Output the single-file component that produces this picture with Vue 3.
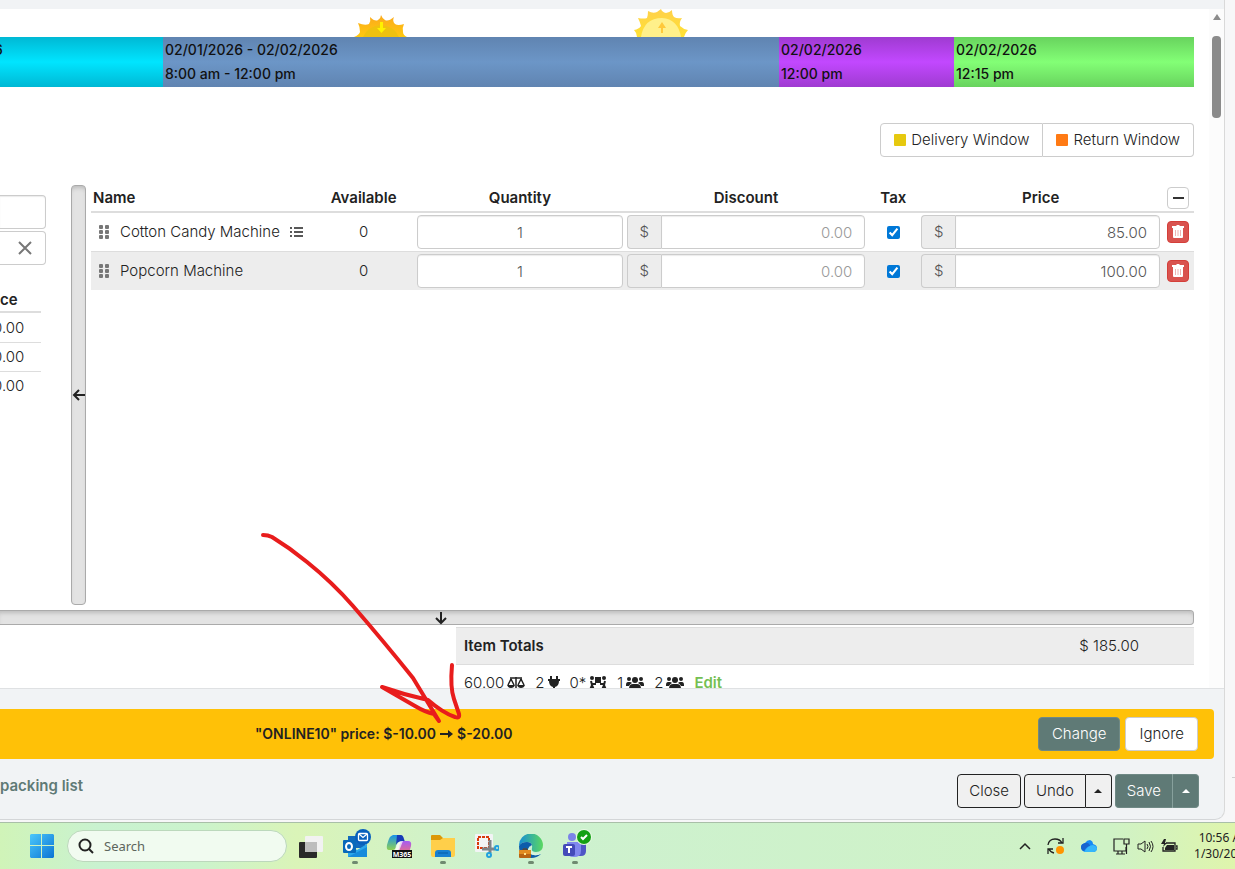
<template>
  <div class="screen">
    <div class="desk">
      <main class="dialog">
        <div class="dialog-top"></div>
        <div class="dialog-main">
          <div class="scroll-area">
            <div class="suns">
              <svg class="sun" viewBox="0 0 56 28" aria-hidden="true">
                <defs>
                  <linearGradient id="sunrise" x1="0" y1="0" x2="0" y2="1">
                    <stop offset="0" stop-color="#fba91d" />
                    <stop offset="1" stop-color="#ffc90e" />
                  </linearGradient>
                </defs>
                <path d="M1 28 Q6 26 7 23 Q7 18 5 14 Q12 17 16 15 Q18 12 17 8 Q22 13 25 11 Q28 9 28 6 Q29 9 32 11 Q35 13 41 8 Q39 12 42 15 Q45 17 51 15 Q49 19 50 23 Q50 26 54 28Z" fill="url(#sunrise)" />
                <path d="M10 28 Q15 17 28 16 Q41 17 46 28Z" fill="#efc10f" />
                <path d="M27 13h3v6h3l-4.500 5l-4.500-5h3z" fill="#fff200" />
              </svg>
              <svg class="sun" viewBox="0 0 56 28" aria-hidden="true">
                <defs>
                  <linearGradient id="sunset" x1="0" y1="0" x2="0" y2="1">
                    <stop offset="0" stop-color="#ffd04b" />
                    <stop offset="1" stop-color="#ffe234" />
                  </linearGradient>
                </defs>
                <path d="M4 28 Q4 24 1 21 Q6 20 8 17 Q7 13 5 9 Q11 10 14 9 Q15 6 15 2 Q20 5 24 3 L28 0 Q29 3 33 4 Q36 4 39 1 Q39 6 41 8 Q44 10 49 9 Q46 13 47 17 Q50 20 55 21 Q52 24 51 28Z" fill="url(#sunset)" />
                <path d="M8 28 Q11 9 29 9 Q45 10 48 28Z" fill="#fff08a" />
                <path d="M29 13l4 6h-3v5h-2v-5h-3z" fill="#ffc93a" />
              </svg>
            </div>

            <div class="timeline">
              <div class="slot cyan"><span class="cut">6</span></div>
              <div v-for="slot in slots" :key="slot.color" class="slot" :class="slot.color">
                <span>{{ slot.date }}</span>
                <span>{{ slot.time }}</span>
              </div>
            </div>

            <div class="windows">
              <button type="button" class="window-btn"><i class="swatch yellow"></i>Delivery Window</button>
              <button type="button" class="window-btn"><i class="swatch orange"></i>Return Window</button>
            </div>

            <div class="workspace">
              <aside class="side">
                <input class="field side-field" type="text" aria-label="Filter" />
                <div class="clear-row">
                  <button type="button" class="clear" aria-label="Clear">
                    <svg viewBox="0 0 14 14"><path d="M1 1L13 13M13 1L1 13" fill="none" stroke="#777" stroke-width="2" /></svg>
                  </button>
                </div>
                <table class="side-table">
                  <thead><tr><th>ce</th></tr></thead>
                  <tbody>
                    <tr v-for="n in 3" :key="n"><td>0.00</td></tr>
                  </tbody>
                </table>
              </aside>

              <div class="split-v">
                <svg viewBox="0 0 14 14" class="arrow"><path d="M13 7H2M7 2L2 7L7 12" fill="none" stroke="#222" stroke-width="2" /></svg>
              </div>

              <section class="items">
                <table class="item-table">
                  <colgroup>
                    <col />
                    <col class="c-avail" />
                    <col class="c-qty" />
                    <col class="c-money" />
                    <col class="c-tax" />
                    <col class="c-money" />
                    <col class="c-action" />
                  </colgroup>
                  <thead>
                    <tr>
                      <th class="name">Name</th>
                      <th>Available</th>
                      <th>Quantity</th>
                      <th>Discount</th>
                      <th>Tax</th>
                      <th>Price</th>
                      <th><button type="button" class="square" aria-label="Collapse"><i class="minus"></i></button></th>
                    </tr>
                  </thead>
                  <tbody>
                    <tr v-for="item in items" :key="item.name">
                      <td>
                        <div class="item-name">
                          <svg class="grip" viewBox="0 0 11 14" aria-hidden="true">
                            <g fill="#777">
                              <rect v-for="d in dots" :key="d.x + '-' + d.y" :x="d.x" :y="d.y" width="4" height="4" rx="1" />
                            </g>
                          </svg>
                          <span>{{ item.name }}</span>
                          <svg v-if="item.list" class="list" viewBox="0 0 13 10" aria-hidden="true">
                            <path d="M0 1h2M0 5h2M0 9h2M4 1h9M4 5h9M4 9h9" stroke="#222" stroke-width="1.500" />
                          </svg>
                        </div>
                      </td>
                      <td>0</td>
                      <td><input v-model="item.qty" class="field center" type="text" :aria-label="item.name + ' quantity'" /></td>
                      <td>
                        <label class="money"><span>$</span><input class="field" type="text" placeholder="0.00" /></label>
                      </td>
                      <td><input v-model="item.tax" class="check" type="checkbox" :aria-label="item.name + ' tax'" /></td>
                      <td>
                        <label class="money"><span>$</span><input v-model="item.price" class="field" type="text" /></label>
                      </td>
                      <td>
                        <button type="button" class="square delete" aria-label="Delete">
                          <svg viewBox="0 0 12 14">
                            <path d="M0 1h4l1-1h2l1 1h4v2H0zM1 3h10v9q0 1-1 1H2q-1 0-1-1z" fill="#fff" />
                            <path d="M3.500 5v6M6 5v6M8.500 5v6" stroke="#eeb5b3" />
                          </svg>
                        </button>
                      </td>
                    </tr>
                  </tbody>
                </table>
              </section>
            </div>

            <div class="split-h">
              <svg viewBox="0 0 14 14" class="arrow"><path d="M7 1V12M2 7L7 12L12 7" fill="none" stroke="#222" stroke-width="2" /></svg>
            </div>

            <section class="totals">
              <div class="total-row"><strong>Item Totals</strong><span>$ 185.00</span></div>
              <div class="stats">
                <span>60.00
                  <svg class="wide" viewBox="0 0 18 14">
                    <path d="M9 1V13M4 13H14M3 2H15M4 3L1 9M4 3L7 9M14 3L11 9M14 3L17 9" fill="none" stroke="#222" stroke-width="1.500" />
                    <path d="M0 9h8q-1 3-4 3t-4-3zM10 9h8q-1 3-4 3t-4-3z" fill="#222" />
                  </svg>
                </span>
                <span>2
                  <svg class="plug" viewBox="0 0 12 14"><path d="M2 0h2v3h4V0h2v3h2v2h-1q0 5-4 6v2H5v-2q-4-1-4-6H0V3h2z" fill="#222" /></svg>
                </span>
                <span>0*
                  <svg class="wide" viewBox="0 0 18 14">
                    <circle cx="3" cy="2" r="2" fill="#222" /><circle cx="15" cy="2" r="2" fill="#222" />
                    <rect x="6" y="1" width="6" height="6" fill="#222" />
                    <path d="M2 5L3 9L1 14M3 9L5 14M3 8H7M16 5L15 9L17 14M15 9L13 14M15 8H11" fill="none" stroke="#222" stroke-width="2" />
                  </svg>
                </span>
                <span v-for="n in 2" :key="n">{{ n }}
                  <svg class="wide" viewBox="0 0 18 14">
                    <g fill="#222">
                      <circle cx="9" cy="4" r="3" /><circle cx="3" cy="3" r="2" /><circle cx="15" cy="3" r="2" />
                      <path d="M3 13q0-5 4-5h4q4 0 4 5zM0 9q0-3 2-3h2q1 0 2 1q-2 1-3 3H0zM18 9q0-3-2-3h-2q-1 0-2 1q2 1 3 3h3z" />
                    </g>
                  </svg>
                </span>
                <a href="#" class="edit">Edit</a>
              </div>
            </section>
          </div>

          <div class="scrollbar">
            <svg viewBox="0 0 8 6"><path d="M4 0L8 6H0z" fill="#8b8b8b" /></svg>
            <div class="thumb"></div>
          </div>
        </div>

        <footer class="dialog-footer">
          <div class="notice">
            <strong class="notice-text">"ONLINE10" price: $-10.00
              <svg viewBox="0 0 13 8"><path d="M0 4H9" stroke="#222" stroke-width="2" /><path d="M8 0L13 4L8 8z" fill="#222" /></svg>
              $-20.00</strong>
            <button type="button" class="btn primary">Change</button>
            <button type="button" class="btn light">Ignore</button>
          </div>
          <div class="actions">
            <a href="#" class="packing">packing list</a>
            <button type="button" class="btn outline">Close</button>
            <div class="group">
              <button type="button" class="btn outline">Undo</button>
              <button type="button" class="btn outline caret" aria-label="More undo options"><i></i></button>
            </div>
            <div class="group">
              <button type="button" class="btn primary">Save</button>
              <button type="button" class="btn primary caret" aria-label="More save options"><i></i></button>
            </div>
          </div>
        </footer>
      </main>
      <div class="behind"></div>
    </div>

    <nav class="taskbar">
      <button type="button" class="app start" aria-label="Start">
        <svg viewBox="0 0 24 24">
          <defs>
            <linearGradient id="win" x1="0" y1="0" x2="1" y2="1">
              <stop offset="0" stop-color="#4cc8fb" />
              <stop offset="1" stop-color="#0a74d4" />
            </linearGradient>
          </defs>
          <path d="M1 0h10v11H0V1zM12 0h11l1 1v10H12zM0 12h11v12H1l-1-1zM12 12h12v11l-1 1H12z" fill="url(#win)" />
        </svg>
      </button>
      <label class="search">
        <svg viewBox="0 0 16 16"><circle cx="7" cy="7" r="5.500" fill="none" stroke="#222" stroke-width="2" /><path d="M11 11L15 15" stroke="#222" stroke-width="2" /></svg>
        <input type="text" placeholder="Search" aria-label="Search" />
      </label>
      <button type="button" class="app" aria-label="Task view">
        <svg viewBox="0 0 24 24">
          <rect x="0" y="8" width="18" height="16" rx="1" fill="#292929" />
          <rect x="6" y="2" width="18" height="16" rx="1" fill="#f2f2f2" />
          <rect x="6" y="8" width="12" height="10" fill="#bdbdbd" />
        </svg>
      </button>
      <button type="button" class="app running" aria-label="Outlook">
        <svg class="badged" viewBox="0 0 28 28">
          <rect x="7" y="6" width="17" height="12" fill="#1169bd" />
          <path d="M7 14L16 20L26 14V27H7z" fill="#2ba7ea" />
          <path d="M7 27L26 17V27z" fill="#168bdc" />
          <rect x="2" y="10" width="13" height="13" rx="1" fill="#0869ba" />
          <ellipse cx="8" cy="16.500" rx="3" ry="3.500" fill="none" stroke="#fff" stroke-width="2" />
          <circle cx="22" cy="7" r="8" fill="#075fbc" />
          <rect x="17.500" y="3.500" width="9" height="7" rx="1" fill="none" stroke="#fff" stroke-width="1.300" />
          <path d="M18 4L22 7.500L26 4" fill="none" stroke="#fff" stroke-width="1.300" />
        </svg>
      </button>
      <button type="button" class="app" aria-label="M365 Copilot">
        <svg class="badged" viewBox="0 0 28 28">
          <defs>
            <linearGradient id="cop-a" x1="0" y1="0" x2="0" y2="1">
              <stop offset="0" stop-color="#1692ec" /><stop offset="1" stop-color="#8fd151" />
            </linearGradient>
            <linearGradient id="cop-b" x1="0" y1="0" x2="0" y2="1">
              <stop offset="0" stop-color="#a55cf5" /><stop offset="1" stop-color="#fb7466" />
            </linearGradient>
          </defs>
          <path d="M8 5h8q-2 3-4 10q-1 5-5 5H4q-3 0-2-5q2-7 3-8t3-2z" fill="url(#cop-a)" />
          <path d="M12 5h4q2 0 3 4l1 3h-6q-2 0-3 3z" fill="#173cb8" />
          <path d="M17 11h6q4 0 3 5l-3 10h-9q-3 0-2-4l2-4q1-6 3-7z" fill="url(#cop-b)" />
          <path d="M11 15l4-4h3l-4 10h-4z" fill="#fff" opacity=".7" />
          <rect x="7" y="20" width="20" height="8" fill="#111" />
          <text x="17" y="27" text-anchor="middle" class="m365">M365</text>
        </svg>
      </button>
      <button type="button" class="app running" aria-label="File Explorer">
        <svg viewBox="0 0 24 24">
          <path d="M0 2q0-1 1-1h8l3 3h11q1 0 1 1v5H0z" fill="#dc9807" />
          <path d="M0 6h9l3-2h12v17q0 2-2 2H2q-2 0-2-2z" fill="#ffcf4a" />
          <path d="M4 23v-4q0-3 3-3h10q3 0 3 3v4z" fill="#1780d2" />
          <path d="M7 19h10" stroke="#075da7" />
        </svg>
      </button>
      <button type="button" class="app" aria-label="Snipping Tool">
        <svg viewBox="0 0 24 24">
          <rect width="18" height="18" rx="1" fill="#f2f4f5" />
          <rect x="3" y="3" width="11" height="11" fill="none" stroke="#d93a0c" stroke-width="2" stroke-dasharray="3 1" />
          <path d="M15 6V19M7 15H20" stroke="#7d8589" stroke-width="3" />
          <circle cx="14" cy="21" r="2" fill="none" stroke="#20a1de" stroke-width="2" />
          <circle cx="22" cy="14" r="2" fill="none" stroke="#20a1de" stroke-width="2" />
        </svg>
      </button>
      <button type="button" class="app running" aria-label="Edge">
        <svg viewBox="0 0 24 24">
          <defs>
            <linearGradient id="edge" x1="0" y1="0" x2="1" y2="0">
              <stop offset="0" stop-color="#168ed6" /><stop offset="1" stop-color="#5bd860" />
            </linearGradient>
          </defs>
          <path d="M0 12A12 12 0 0 1 24 11q0 7-7 7q-5 0-4-4q1-6-5-6q-6 0-8 4z" fill="url(#edge)" />
          <path d="M0 12q2-4 8-4q4 0 5 3q-5 3-2 8q3 4 11 1q-4 4-10 4Q0 23 0 12z" fill="#0d5cab" />
          <path d="M13 11q-4 3-1 6q4 4 10 2q-3 3-7 2q-7-1-6-6q1-3 4-4z" fill="#d7f5df" />
          <rect x="0" y="16" width="12" height="8" rx="1" fill="#b86412" />
          <path d="M0 17q0-1 1-1h10q1 0 1 1v3H0z" fill="#e28b20" />
          <path d="M4 16v-1h4v1" fill="none" stroke="#7a3d06" />
          <rect x="5" y="19" width="2" height="2" fill="#ffe08a" />
        </svg>
      </button>
      <button type="button" class="app running" aria-label="Teams">
        <svg class="badged" viewBox="0 0 28 28">
          <circle cx="11" cy="7" r="4" fill="#7b83e8" />
          <path d="M17 12h8v9q0 5-5 5h-4z" fill="#4f55c6" />
          <path d="M6 12h14v9q0 6-7 6t-7-6z" fill="#8087ee" />
          <rect x="2" y="14" width="12" height="12" rx="2" fill="#444bb9" />
          <path d="M5 17h6M8 17v6" stroke="#fff" stroke-width="2" />
          <circle cx="23" cy="7" r="8" fill="#e6f9e3" /><circle cx="23" cy="7" r="7" fill="#14a014" />
          <path d="M20 7L22 9L26 5" fill="none" stroke="#fff" stroke-width="2" />
        </svg>
      </button>

      <div class="tray">
        <svg class="chev" viewBox="0 0 12 8"><path d="M1 7L6 2L11 7" fill="none" stroke="#222" stroke-width="1.500" /></svg>
        <svg class="sync" viewBox="0 0 18 18">
          <path d="M1 8Q2 2 8 2Q13 2 15 6M16 1V6H11M7 16Q3 15 2 12M1 17V12H6" fill="none" stroke="#222" stroke-width="1.300" />
          <circle cx="13" cy="13" r="4" fill="#ff9500" />
        </svg>
        <svg class="cloud" viewBox="0 0 16 12">
          <path d="M4 12Q0 11 0 7Q0 4 4 3Q6 0 9 0Q12 1 12 4Q16 5 16 8Q16 12 12 12z" fill="#1689f5" />
          <path d="M3 12Q7 5 12 5Q16 6 16 9Q15 12 12 12z" fill="#35b6fb" />
          <path d="M0 7Q0 4 4 3Q8 2 9 6Q6 6 3 11Q0 10 0 7z" fill="#1763cf" />
        </svg>
        <div class="status">
          <svg viewBox="0 0 17 17"><path d="M10 1H1V13H13V9M5 13V16M9 13V16M3 16H12M11 1H16V6H11zM13.500 6V16" fill="none" stroke="#222" stroke-width="1.200" /></svg>
          <svg viewBox="0 0 17 17"><path d="M1 6H4L8 3V14L4 11H1zM10 6Q12 8.500 10 11M12 4Q15 8.500 12 13M14 3Q18 8.500 14 14" fill="none" stroke="#222" /></svg>
          <svg viewBox="0 0 17 17">
            <path d="M5 5H14V13H2V9M15 8H16V11H15" fill="none" stroke="#222" stroke-width="1.300" />
            <path d="M6 7H13V12H4V10zM3 1L0 6H3L2 9L6 5H4L5 1z" fill="#222" />
          </svg>
        </div>
        <div class="clock"><span>10:56 AM</span><span>1/30/2026</span></div>
      </div>
    </nav>

    <svg class="marker" viewBox="0 0 204 194" aria-hidden="true">
      <path d="M3 5Q8 5 12 7Q30 18 47 32Q72 52 93 76Q125 113 153 148L179 191L174 184Q165 182 155 176L122 157Q145 165 168 170Q183 183 195 187Q200 189 199 184L194 169Q190 158 192 135" />
    </svg>
  </div>
</template>

<script setup>
import { ref } from 'vue'

const slots = [
  { color: 'blue', date: '02/01/2026 - 02/02/2026', time: '8:00 am - 12:00 pm' },
  { color: 'purple', date: '02/02/2026', time: '12:00 pm' },
  { color: 'green', date: '02/02/2026', time: '12:15 pm' }
]

const items = ref([
  { name: 'Cotton Candy Machine', list: true, qty: '1', tax: true, price: '85.00' },
  { name: 'Popcorn Machine', list: false, qty: '1', tax: true, price: '100.00' }
])

const dots = [0, 5, 10].flatMap(y => [0, 6].map(x => ({ x, y })))
</script>

<style>
body {
  margin: 0;
}
</style>

<style scoped>
* {
  box-sizing: border-box;
}

.screen {
  position: relative;
  display: flex;
  flex-direction: column;
  height: 100vh;
  overflow: hidden;
  background: #f7f7f8;
  color: #222;
  font-family: Inter, "Open Sans", sans-serif;
  font-size: 15px;
  font-weight: 300;
  line-height: 24px;
}

button,
input {
  font: inherit;
  color: inherit;
}

button {
  padding: 0;
  cursor: pointer;
}

svg {
  display: block;
  flex: none;
}

strong,
th {
  font-weight: 600;
}

.desk {
  display: flex;
  flex: 1;
  min-height: 0;
  padding-bottom: 2px;
}

.dialog {
  display: flex;
  flex: 1;
  flex-direction: column;
  min-width: 0;
  overflow: hidden;
  background: #f1f3f5;
  border-right: 1px solid #d9d9d9;
  border-bottom: 1px solid #d4d6d8;
  border-bottom-right-radius: 10px;
}

.behind {
  display: flex;
  width: 10px;
}

.behind::after {
  content: "";
  width: 3px;
  height: 1px;
  margin: auto 0 42px auto;
  background: #d0d0d0;
}

.dialog-top {
  flex: none;
  height: 9px;
}

.dialog-main {
  display: flex;
  flex: 1;
  min-height: 0;
  background: #fff;
  border-bottom: 1px solid #dfe1e3;
}

.scroll-area {
  flex: 1;
  min-width: 0;
  padding-right: 15px;
  overflow: hidden;
}

.scrollbar {
  display: flex;
  flex-direction: column;
  align-items: center;
  gap: 16px;
  width: 15px;
  padding-top: 5px;
  background: #fcfcfc;
}

.scrollbar svg {
  width: 8px;
  height: 6px;
}

.thumb {
  width: 9px;
  height: 82px;
  border-radius: 4px;
  background: #8b8b8b;
}

.suns {
  display: flex;
  gap: 224px;
  height: 28px;
  padding-left: 353px;
}

.sun {
  width: 56px;
  height: 28px;
}

.timeline {
  display: grid;
  grid-template-columns: 163fr 616fr 175fr 240fr;
  height: 50px;
  font-size: 14px;
  font-weight: 500;
  color: #111;
}

.slot {
  display: flex;
  flex-direction: column;
  padding: 1px 2px;
  white-space: nowrap;
}

.cut {
  margin-left: -8px;
}

.cyan {
  background: linear-gradient(#00b8d4, #00e5ff 50%, #00b8d4);
}

.blue {
  background: linear-gradient(#6084b1, #6c96c7 50%, #6084b1);
}

.purple {
  background: linear-gradient(#9f3bd1, #c248ff 50%, #9f3bd1);
}

.green {
  background: linear-gradient(#68d35e, #83ff76 50%, #68d35e);
}

.windows {
  display: flex;
  justify-content: flex-end;
  padding: 36px 0 28px;
}

.window-btn {
  display: flex;
  align-items: center;
  gap: 5px;
  height: 34px;
  padding: 0 13px;
  background: #fff;
  border: 1px solid #ccc;
}

.window-btn:first-child {
  border-radius: 4px 0 0 4px;
}

.window-btn:last-child {
  border-left: 0;
  border-radius: 0 4px 4px 0;
}

.swatch {
  width: 12px;
  height: 12px;
  border-radius: 1px;
}

.yellow {
  background: #e6c90f;
}

.orange {
  background: #ff7a14;
}

.workspace {
  display: flex;
  height: 420px;
}

.side {
  flex: none;
  width: 46px;
  margin-right: 25px;
  padding-top: 10px;
}

.field {
  display: block;
  width: 100%;
  min-width: 0;
  height: 34px;
  padding: 0 12px;
  text-align: right;
  color: #555;
  background: #fff;
  border: 1px solid #ccc;
  border-radius: 4px;
  box-shadow: inset 0 1px 1px rgba(0, 0, 0, 0.08);
}

.field::placeholder {
  color: #999;
  opacity: 1;
}

.center {
  text-align: center;
}

.side-field,
.clear-row {
  height: 34px;
  border: 1px solid #ccc;
  border-left: 0;
  border-radius: 0 4px 4px 0;
}

.clear-row {
  display: flex;
  justify-content: flex-end;
  align-items: center;
  margin-top: 2px;
  padding-right: 13px;
}

.clear {
  background: none;
  border: 0;
}

.clear svg,
.arrow {
  width: 14px;
  height: 14px;
}

.side-table {
  width: 41px;
  margin-top: 24px;
  border-spacing: 0;
}

.side-table td {
  height: 29px;
  padding: 0;
  text-indent: -7px;
}

.side-table th {
  padding: 0;
  line-height: 22px;
  text-align: left;
  border-bottom: 2px solid #ddd;
}

.side-table tr + tr td {
  border-top: 1px solid #ddd;
}

.split-v,
.split-h {
  display: flex;
  flex: none;
  align-items: center;
  background: #e3e3e3;
  border: 1px solid #aaa;
  border-radius: 4px;
  box-shadow: inset 0 4px 4px -2px #bbb;
}

.split-v {
  width: 15px;
  margin-right: 5px;
}

.split-h {
  height: 15px;
  margin-top: 5px;
  padding-left: 434px;
  border-left: 0;
  border-radius: 0 4px 4px 0;
}

.items {
  flex: 1;
  min-width: 0;
}

.item-table {
  width: 100%;
  table-layout: fixed;
  border-spacing: 0;
}

.c-avail {
  width: 103px;
}

.c-qty {
  width: 19%;
}

.c-money {
  width: 22%;
}

.c-tax {
  width: 52px;
}

.c-action {
  width: 32px;
}

.item-table th {
  height: 28px;
  padding: 0;
  border-bottom: 2px solid #ddd;
}

.item-table .name {
  padding-left: 2px;
  text-align: left;
}

.item-table td {
  padding: 2px;
  text-align: center;
}

.item-table tbody tr:nth-child(even) td {
  background: #ededed;
  border-top: 1px solid #ddd;
}

.item-name {
  display: flex;
  align-items: center;
  gap: 10px;
  padding-left: 6px;
}

.grip {
  width: 11px;
  height: 14px;
}

.list {
  width: 13px;
  height: 10px;
}

.money {
  display: flex;
}

.money span {
  flex: none;
  width: 34px;
  line-height: 32px;
  color: #555;
  background: #ededed;
  border: 1px solid #ccc;
  border-right: 0;
  border-radius: 4px 0 0 4px;
}

.money .field {
  border-radius: 0 4px 4px 0;
}

.check {
  display: block;
  width: 13px;
  height: 13px;
  margin: 0 auto;
  accent-color: #0078d7;
}

.square {
  display: flex;
  align-items: center;
  justify-content: center;
  width: 22px;
  height: 22px;
  margin: 0 auto;
  background: #fff;
  border: 1px solid #ccc;
  border-radius: 4px;
}

.delete {
  background: #d9534f;
  border-color: #d43f3a;
}

.delete svg {
  width: 12px;
  height: 14px;
}

.minus {
  width: 11px;
  height: 2px;
  background: #333;
}

.totals {
  margin: 2px 0 0 456px;
}

.total-row {
  display: flex;
  align-items: center;
  justify-content: space-between;
  height: 38px;
  padding: 0 55px 0 8px;
  background: #ededed;
  border-top: 1px solid #ddd;
  border-bottom: 1px solid #ddd;
}

.stats {
  display: flex;
  gap: 10px;
  padding: 6px 8px;
}

.stats span {
  display: flex;
  align-items: center;
  gap: 3px;
}

.wide {
  width: 18px;
  height: 14px;
}

.plug {
  width: 12px;
  height: 14px;
}

.edit {
  color: #74bf52;
  font-weight: 600;
  text-decoration: none;
}

.dialog-footer {
  flex: none;
  padding: 20px 10px 11px 0;
}

.notice {
  display: flex;
  align-items: center;
  gap: 5px;
  height: 50px;
  padding: 0 16px 0 255px;
  background: #ffc107;
  border-radius: 0 4px 4px 0;
}

.notice-text {
  display: flex;
  flex: 1;
  align-items: center;
  gap: 4px;
  font-size: 14px;
}

.notice-text svg {
  width: 13px;
  height: 8px;
}

.btn {
  height: 34px;
  padding: 0 11px;
  border: 1px solid #ccc;
  border-radius: 4px;
}

.notice .btn {
  padding: 0 13px;
}

.primary {
  color: #fff;
  background: #5f7a76;
  border-color: #6f8985;
}

.light {
  background: #fff;
}

.outline {
  background: #f0f0f0;
  border-color: #222;
}

.actions {
  display: flex;
  align-items: center;
  gap: 3px;
  padding: 15px 15px 0 0;
}

.packing {
  flex: 1;
  padding-bottom: 10px;
  color: #5f7a76;
  font-weight: 600;
  text-decoration: none;
}

.group {
  display: flex;
}

.group .btn:first-child {
  border-radius: 4px 0 0 4px;
}

.group .caret {
  display: flex;
  align-items: center;
  justify-content: center;
  width: 26px;
  padding: 0;
  border-left-width: 0;
  border-radius: 0 4px 4px 0;
}

.group .primary:first-child {
  border-right-color: #87a09c;
}

.caret i {
  border: 4px solid transparent;
  border-top: 0;
  border-bottom-color: currentColor;
}

.taskbar {
  display: flex;
  flex: none;
  align-items: center;
  height: 47px;
  border-top: 1px solid #a9bfa8;
  background: linear-gradient(90deg, #d0f4b8, #c9f2d0 8%, #cbf3cc 16%, #daf4b8 24%, #cdf1d0 40%, #cff2c6 90%, #dff5ac);
  font-family: "Noto Sans", sans-serif;
  font-weight: 400;
}

.app {
  position: relative;
  display: flex;
  align-items: center;
  justify-content: center;
  width: 44px;
  height: 46px;
  background: none;
  border: 0;
}

.app svg {
  width: 24px;
  height: 24px;
}

.app .badged {
  width: 28px;
  height: 28px;
  margin-bottom: 4px;
  overflow: visible;
}

.running::after {
  content: "";
  position: absolute;
  bottom: 5px;
  left: 19px;
  width: 6px;
  height: 3px;
  border-radius: 2px;
  background: #6f8a70;
}

.m365 {
  fill: #fff;
  font-family: "Noto Sans", sans-serif;
  font-size: 7px;
  font-weight: 700;
}

.start {
  margin-left: 20px;
}

.search {
  display: flex;
  align-items: center;
  gap: 10px;
  width: 220px;
  height: 32px;
  margin: 0 2px 0 3px;
  padding: 0 10px;
  border: 1px solid #bcd8bc;
  border-radius: 16px;
  background: #f1fbf0;
}

.search svg {
  width: 16px;
  height: 16px;
}

.search input {
  flex: 1;
  min-width: 0;
  padding: 0;
  border: 0;
  outline: 0;
  background: none;
  font-size: 13px;
}

.search input::placeholder {
  color: #5d655d;
  opacity: 1;
}

.tray {
  display: flex;
  flex: none;
  align-items: center;
  gap: 16px;
  margin: 0 -16px 0 auto;
}

.chev {
  width: 12px;
  height: 8px;
}

.sync {
  width: 18px;
  height: 18px;
}

.cloud {
  width: 16px;
  height: 12px;
}

.status {
  display: flex;
  gap: 7px;
}

.status svg {
  width: 17px;
  height: 17px;
}

.clock {
  display: flex;
  flex-direction: column;
  align-items: flex-end;
  font-size: 12px;
  line-height: 16px;
}

.marker {
  position: absolute;
  top: 530px;
  left: 260px;
  width: 204px;
  height: 194px;
  pointer-events: none;
}

.marker path {
  fill: none;
  stroke: #e81c1c;
  stroke-width: 4;
  stroke-linecap: round;
  stroke-linejoin: round;
}
</style>
